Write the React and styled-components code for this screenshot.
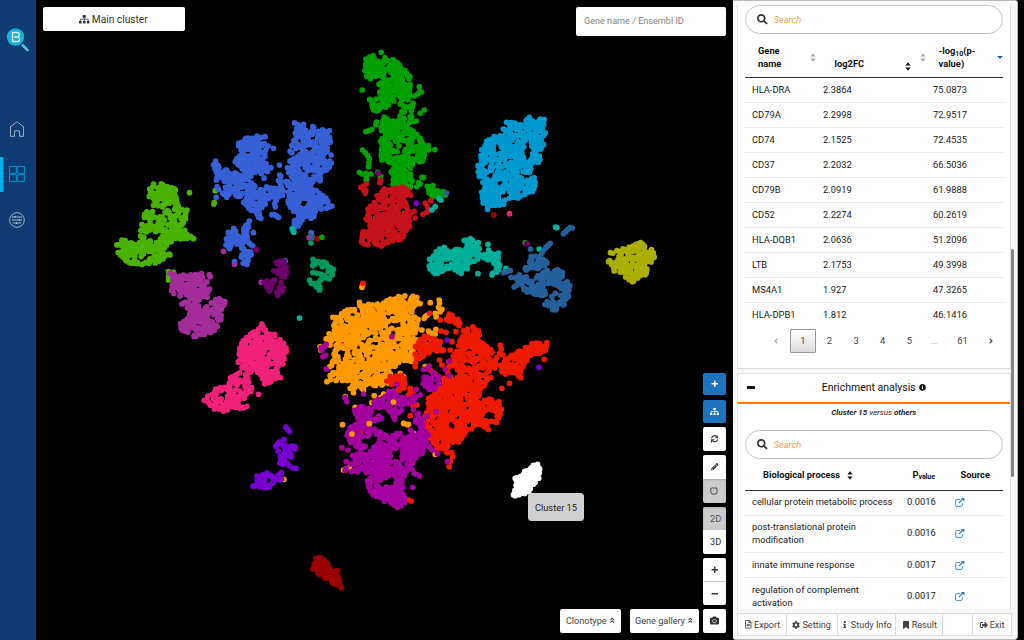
import React from "react";
import styled, { createGlobalStyle, css } from "styled-components";
import {
  FaSitemap, FaPlus, FaMinus, FaSync, FaPencilAlt, FaCamera, FaSearch, FaCog, FaInfo,
  FaBookmark, FaRegFileAlt, FaSignOutAlt, FaInfoCircle, FaAngleDoubleUp,
  FaAngleLeft, FaAngleRight,
} from "react-icons/fa";

const GlobalStyle = createGlobalStyle`
  * { box-sizing: border-box; }
  body { margin: 0; background: #000; overflow: hidden; font-family: Roboto, "Liberation Sans", sans-serif; color: #222; font-size: 9.33px; }
  svg { display: block; flex: none; }
`;

/* ---------- scatter data: outlines are in thirds of a pixel from each origin ---------- */
const C = {
  lime: "#4ab300", blue: "#3560d6", plum: "#a32d9b", dark: "#6b006b", sea: "#00995c",
  green: "#00a000", red: "#c41218", sky: "#0099cf", teal: "#00ae9c", steel: "#24619c",
  yellow: "#abb000", orange: "#ff9900", flame: "#f01a00", purple: "#a3009e",
  pink: "#f02277", violet: "#7500d1", maroon: "#990000", white: "#ffffff",
};

const GROUPS = [
  { o: [100, 110], c: "lime", areas: ["160,225 190,225 225,235 230,260 235,290 260,305 255,345 250,372 282,385 240,387 205,398 205,415 190,450 155,460 100,462 80,455 50,428 48,405 80,398 115,402 125,375 125,345 170,345 180,320 200,300 175,285 150,260 150,240", "130,310 155,305 163,318 150,330 132,320"], holes: ["165,365 190,378 155,395 140,385", "150,400 175,398 165,412"], dots: "268,248 345,242 342,278 341,282 160,286 65,390 75,392 205,485 205,510 220,487 205,500 208,432 209,435 260,300 280,386 272,380" },
  { o: [100, 110], c: "blue", areas: ["412,100 435,88 465,80 503,85 500,105 480,112 478,125 498,120 495,150 500,200 470,208 440,195 405,155 425,130", "345,150 360,175 400,185 440,205 470,235 520,225 540,190 552,250 525,285 500,260 480,315 450,300 430,275 400,255 380,262 355,240 350,200 340,165", "585,40 608,42 620,70 640,52 690,60 692,110 675,120 690,135 692,180 660,190 660,215 635,205 650,245 680,265 692,290 650,295 645,330 610,320 605,345 580,350 578,330 590,310 565,285 568,250 540,235 555,215 580,210 558,180 570,150 590,140 605,125 605,100 575,125 568,120 585,95", "372,385 405,350 430,355 443,325 450,335 440,370 445,400 462,400 455,425 440,460 420,455 430,420 415,405 375,415"], holes: ["425,220 450,212 445,228", "600,270 618,285 605,295"], dots: "520,115 512,173 538,165 525,290 482,325 348,262 515,314 522,314 528,317 535,322 460,368 403,455 633,368 555,452 695,288 638,50 475,322 470,78 495,80" },
  { o: [100, 110], c: "plum", areas: ["215,500 235,500 270,495 305,490 312,505 330,540 320,558 290,560 298,580 290,610 320,590 345,570 375,578 365,600 362,620 345,662 290,683 240,665 240,640 265,620 258,575 255,560 215,555 210,525"], holes: ["262,545 280,535 275,560"], dots: "357,566 362,628 210,489 222,493 232,505 245,582 327,494 330,500 370,424 403,463 483,517 627,383" },
  { o: [100, 110], c: "dark", areas: ["528,455 558,452 560,475 566,498 545,500 522,482", "490,515 520,505 520,515 510,545 500,535", "540,515 552,525 545,550 525,555 538,535"], dots: "468,419 523,510 543,518 550,534 532,556 500,520 492,518" },
  { o: [100, 110], c: "sea", areas: ["632,450 670,455 690,465 705,480 690,505 665,520 657,540 645,525 665,505 685,490 680,475 665,468 638,465"], dots: "638,448 640,460 638,488 650,490 662,492 628,510 633,520 632,399 658,540 650,530 700,478" },
  { o: [100, 110], c: "teal", dots: "576,356 578,362 581,367 598,624" },
  { o: [100, 110], c: "steel", dots: "635,378 637,383" },
  { o: [100, 110], c: "maroon", dots: "650,386" },
  { o: [100, 110], c: "green", dots: "665,382" },

  { o: [340, 40], c: "green", areas: ["75,60 95,48 115,65 150,52 180,60 190,90 210,105 210,170 195,180 150,180 135,210 100,215 92,180 120,170 115,125 80,110 72,90", "195,200 225,190 215,225 230,240 210,250 195,215", "105,245 130,235 150,240 190,235 200,260 230,285 250,310 280,325 255,340 250,365 215,370 210,400 220,440 160,440 150,400 155,370 125,360 120,320 130,280 115,260", "265,440 285,445 315,462 290,472 265,460"], holes: ["105,70 125,75 115,85", "180,295 205,320 185,325 170,310"], dots: "123,37 66,150 223,168 232,162 240,155 237,140 244,156 77,275 86,272 95,268 240,220 252,210 67,330 75,338 82,347 87,356 86,368 85,380 57,397 66,402 78,400 92,402 78,412 78,420 250,413 235,428 240,432 230,440 245,412 278,437 310,455 278,470 120,410 113,397 555,608 180,192 190,198 185,215 180,228" },
  { o: [340, 40], c: "red", areas: ["130,450 160,445 185,438 215,455 220,466 190,470 200,500 210,540 205,560 185,600 150,600 135,620 105,610 65,618 62,580 95,570 85,540 85,510 100,490 110,465"], holes: ["125,540 140,545 130,555", "160,490 178,485 170,500"], dots: "62,442 70,438 78,432 70,450 75,460 77,450 120,420 119,428 255,490 262,500 265,512 260,516 248,523 272,482 225,534 213,517 222,514 83,508 78,537" },
  { o: [340, 40], c: "sky", areas: ["500,250 520,245 550,255 560,235 580,228 610,240 612,290 605,320 592,370 578,378 565,400 588,425 585,450 550,470 520,475 490,470 490,492 440,502 422,480 428,460 435,440 415,400 415,360 425,340 435,305 470,295"], holes: ["545,340 572,295 578,345 555,360", "500,430 508,432 515,455 506,452", "525,375 545,390 550,405 530,395"], dots: "442,508 430,463 462,290" },
  { o: [340, 40], c: "violet", dots: "228,490" },
  { o: [340, 40], c: "dark", dots: "114,400 560,611" },
  { o: [340, 40], c: "steel", dots: "319,459" },
  { o: [340, 40], c: "teal", dots: "297,476 302,480 275,510 285,500 646,561 650,563" },
  { o: [340, 40], c: "maroon", dots: "461,525" },
  { o: [340, 40], c: "pink", dots: "508,521" },

  { o: [400, 200], c: "teal", areas: ["85,180 100,165 130,145 150,160 180,130 200,118 230,118 240,145 265,160 298,160 290,185 305,210 280,220 285,190 240,170 210,185 200,208 150,205 105,220 88,195"], holes: ["125,180 150,185 155,198 130,195"], dots: "263,133 233,221 317,205 183,220 417,147 275,225 265,150 132,142 175,215" },
  { o: [400, 200], c: "steel", areas: ["395,170 430,170 440,190 425,210 405,200 378,212 372,205 390,190", "345,230 365,225 385,240 410,235 430,212 455,205 485,215 490,240 508,255 505,290 490,320 465,330 437,315 445,305 470,310 485,285 480,262 450,248 430,255 440,265 430,295 400,280 370,275 355,250"], dots: "391,147 450,130 443,137 437,143 430,150 425,160 490,101 497,95 503,88 511,82 516,84 319,215 330,212 332,232 342,261 350,255 455,290 465,280 310,218" },
  { o: [400, 200], c: "yellow", areas: ["648,158 665,150 672,137 700,135 725,125 740,145 760,153 758,180 745,195 735,220 700,243 670,220 642,210 630,185 655,175"], holes: ["670,190 700,185 705,192 690,195"], dots: "631,158 638,160 625,185 650,152 762,172 735,224 642,213 697,245" },

  { o: [300, 270], c: "orange", areas: ["115,135 130,125 180,105 240,105 260,95 310,78 350,85 360,100 330,115 350,150 345,230 330,270 290,280 270,315 240,345 200,345 165,360 140,335 95,330 90,290 105,250 80,205 95,180"], holes: ["105,253 135,235 147,242 140,252 115,262", "240,210 260,205 255,230", "285,110 300,120 290,130"], dots: "98,142 178,97 205,103 232,102 375,140 372,145 380,136 417,90 418,100 415,112 420,125 408,140 405,130 425,118 385,183 395,190 407,178 405,192 383,200 390,98 383,226 60,230 62,240 80,335 127,464 185,52 187,46 150,355 160,368 190,362 135,380 222,377 232,390 250,372 310,460 325,463 130,600 148,593 205,460 185,445 165,412 215,398 155,492 300,310 310,320 295,330 405,553 340,490 245,345 265,340 280,395 375,290 350,225 360,215 345,180 365,180 330,260 340,275 220,345 185,355 258,375 242,382" },
  { o: [300, 270], c: "flame", areas: ["435,125 470,150 495,165 535,180 545,220 575,240 582,270 580,310 565,335 545,350 535,380 520,395 530,460 500,480 480,510 450,520 440,540 410,535 385,500 375,460 380,400 400,370 430,350 440,300 440,280 465,250 480,205 490,180 465,160 440,150", "530,400 570,385 600,395 602,430 590,460 565,475 525,465", "600,285 625,265 660,240 710,220 740,220 738,240 725,250 690,255 672,290 660,322 635,305 605,310", "365,195 410,210 422,240 380,250 345,280 350,230", "270,330 310,312 318,355 300,370"], holes: ["549,440 566,418 590,423 585,452 562,454", "440,465 460,450 470,475 445,480", "450,285 480,310 460,330 445,310", "480,375 500,370 495,395"], dots: "423,183 437,187 467,185 188,40 388,130 605,355 628,340 333,693 325,690 330,437 338,407 475,516 732,268 600,225 603,237 598,250 590,262 608,255 740,218 455,548 457,560 450,575 447,590 440,548 420,150 455,215 450,240 418,270 425,285 400,310 430,325 420,215 430,240 270,320 290,318 330,355 280,340 325,375 350,405 358,520 345,290 180,485 260,333 330,365 338,370 390,300 405,312 410,395 385,385" },
  { o: [300, 270], c: "purple", areas: ["370,315 400,305 410,330 405,360 380,360 368,340", "140,475 175,460 165,420 210,398 250,385 280,365 290,385 330,385 355,375 320,410 280,445 260,410 235,400 215,420 210,460 220,480 250,490 300,490 330,515 335,490 350,430 365,440 380,490 375,540 350,560 330,585 325,600 305,625 310,660 325,690 290,710 250,690 210,670 200,630 220,610 160,605 145,580 180,540 145,510", "225,425 238,415 242,445 225,455"], holes: ["270,540 300,540 305,565 285,575 275,590", "175,520 215,500 235,515 200,525", "255,625 285,620 280,645 250,650", "295,425 330,440 320,480 290,480"], dots: "65,240 78,223 73,230 68,260 76,256 63,233 78,297 275,200 387,288 380,296 370,298 447,273 447,317 435,298 290,343 348,358 190,372 135,383 140,395 125,533 143,540 157,557 138,575 135,601 380,438 407,425 397,540 412,551 442,575 337,652 335,597 342,610 358,618 348,612 360,375 340,420 280,370 265,365 415,340 415,320 325,500 370,515 387,530 393,538 345,455 150,500 155,605 138,595 385,495 330,480" },
  { o: [300, 270], c: "orange", dots: "313,461 322,464 155,492 280,396 207,461" },
  { o: [300, 270], c: "violet", dots: "441,210 716,292" },
  { o: [300, 270], c: "white", dense: true, areas: ["645,625 670,614 680,595 712,582 720,595 713,625 695,655 660,678 642,676 642,660 650,650 644,640"], dots: "712,583 640,674 645,677 688,600 645,625" },

  { o: [190, 310], c: "pink", areas: ["190,70 215,45 230,65 250,80 285,105 285,130 275,160 262,190 265,200 245,212 225,225 215,205 205,185 190,178 165,195 180,220 188,235 150,270 155,285 110,300 65,295 50,272 65,240 110,230 128,195 160,185 148,160 145,100 175,80"], holes: ["215,85 240,98 235,108 220,95", "80,250 105,240 115,250 100,262", "150,225 165,235 155,245"], dots: "205,253 270,203 170,289 160,293 149,295 42,271 253,73 288,125 280,100 215,42 185,70" },
  { o: [190, 310], c: "violet", areas: ["265,390 278,386 285,405 300,412 300,437 285,445 290,465 268,462 270,435 258,410", "192,525 202,497 225,488 265,495 270,508 240,533 198,533"], dots: "287,351 292,357 298,364 314,410 315,417 305,408 308,474 317,475 297,467 273,488 188,528 303,437" },
  { o: [190, 310], c: "orange", dots: "281,508" },
  { o: [190, 310], c: "violet", dots: "274,507" },
  { o: [190, 310], c: "maroon", dense: true, areas: ["370,755 388,742 410,755 420,775 435,788 445,800 455,833 430,820 400,805 375,778"], dots: "442,782 438,788 368,777 453,834 388,743 445,825" },
];

const pairs = (s) => s.split(" ").map((p) => p.split(",").map(Number));

function inside([x, y], poly) {
  let hit = false;
  for (let i = 0, j = poly.length - 1; i < poly.length; j = i++) {
    const [xi, yi] = poly[i];
    const [xj, yj] = poly[j];
    if (yi > y !== yj > y && x < ((xj - xi) * (y - yi)) / (yj - yi) + xi) hit = !hit;
  }
  return hit;
}

function randomFrom(seed) {
  let s = seed;
  return () => {
    s = (s * 1664525 + 1013904223) % 4294967296;
    return s / 4294967296;
  };
}

function scatterPath({ o, areas = [], holes = [], dots, dense }, index) {
  const rnd = randomFrom(977 * (index + 3));
  const cuts = holes.map(pairs);
  const points = dots ? pairs(dots) : [];
  areas.map(pairs).forEach((poly) => {
    const xs = poly.map((p) => p[0]);
    const ys = poly.map((p) => p[1]);
    const x0 = Math.min(...xs), y0 = Math.min(...ys);
    const w = Math.max(...xs) - x0, h = Math.max(...ys) - y0;
    const count = (w * h) / (dense ? 35 : 76);
    for (let i = 0; i < count; i++) {
      const p = [x0 + rnd() * w, y0 + rnd() * h];
      if (inside(p, poly) && !cuts.some((c) => inside(p, c))) points.push(p);
    }
    // cells along the rim keep thin necks connected
    poly.forEach(([ax, ay], i) => {
      const [bx, by] = poly[(i + 1) % poly.length];
      const steps = Math.max(1, Math.round(Math.hypot(bx - ax, by - ay) / 12));
      for (let s = 0; s < steps; s++) {
        if (rnd() < 0.45) continue;
        const t = s / steps;
        points.push([ax + (bx - ax) * t + (rnd() - 0.5) * 8, ay + (by - ay) * t + (rnd() - 0.5) * 8]);
      }
    });
  });
  return points.map(([x, y]) => `M${(o[0] + x / 3).toFixed(1)} ${(o[1] + y / 3).toFixed(1)}h.01`).join("");
}

const PATHS = GROUPS.map((g, i) => ({ color: C[g.c], d: scatterPath(g, i) }));

/* ---------- page ---------- */
const Page = styled.div`
  display: flex;
  width: 1024px;
  height: 640px;
  background: #000;
  overflow: hidden;
`;
const Sidebar = styled.nav`
  width: 35.5px;
  background: #0f3c73;
  padding-top: 26px;
  display: flex;
  flex-direction: column;
  align-items: center;
`;
const Logo = styled.div`
  height: 80px;
  width: 28px;
`;
const NavItem = styled.a`
  width: 35.5px;
  height: 35px;
  margin-bottom: 10.8px;
  padding-right: 1px;
  display: flex;
  align-items: center;
  justify-content: center;
  color: ${(p) => (p.$active ? "#078cc6" : "#a6b8cf")};
  box-shadow: ${(p) => (p.$active ? "inset 3.5px 0 0 #00b1e8" : "none")};
  &:first-of-type { margin-top: 5px; }
`;

const Stage = styled.main`
  position: relative;
  width: 697.5px;
  height: 640px;
`;
const Plot = styled.svg`
  position: absolute;
  inset: 0;
`;
const TopBar = styled.div`
  position: relative;
  display: flex;
  justify-content: space-between;
  align-items: flex-start;
  padding: 7px 7px 0 7px;
`;
const MainCluster = styled.button`
  width: 142px;
  height: 24px;
  border: 0;
  border-radius: 2px;
  background: #fff;
  color: #333;
  font: 10.2px Roboto, sans-serif;
  display: flex;
  align-items: center;
  justify-content: center;
  gap: 2px;
`;
const GeneInput = styled.input`
  width: 150px;
  height: 28.5px;
  border: 0;
  border-radius: 2px;
  padding: 0 8px;
  font: 9.1px Roboto, sans-serif;
  background: #fff;
  &::placeholder { color: #858585; opacity: 1; }
`;
const Tip = styled.div`
  position: absolute;
  left: 492.5px;
  top: 493px;
  width: 56px;
  height: 28px;
  border-radius: 3.5px;
  background: #cfcfcf;
  color: #222;
  display: flex;
  align-items: center;
  justify-content: center;
  font-size: 9.3px;
`;
const Tools = styled.div`
  position: absolute;
  right: 7.5px;
  bottom: 7.5px;
  display: flex;
  flex-direction: column;
  gap: 4px;
`;
const Group = styled.div`
  border-radius: 2px;
  overflow: hidden;
  margin-bottom: ${(p) => p.$mb || 0}px;
`;
const Tool = styled.button`
  display: flex;
  align-items: center;
  justify-content: center;
  width: 22.5px;
  height: ${(p) => p.$h || 24}px;
  padding: 0;
  border: 0;
  font: 9.3px Roboto, sans-serif;
  padding-left: ${(p) => (p.$text ? 3 : 0)}px;
  background: #fff;
  color: #333;
  ${(p) => p.$blue && css`background: #1e73be; color: #fff;`}
  ${(p) => p.$on && css`background: #cbcbcb; color: #555; box-shadow: inset 0 1px 2px #aaa;`}
  ${(p) => p.$line && css`border-top: 1px solid #ccc;`}
`;
const Drawers = styled.div`
  position: absolute;
  right: 34px;
  bottom: 7.5px;
  display: flex;
  gap: 8.5px;
`;
const Drawer = styled.button`
  width: ${(p) => p.$w}px;
  height: 24px;
  border: 0;
  border-radius: 2px;
  background: #fff;
  color: #444;
  padding: 0;
  font: 9.1px Roboto, sans-serif;
  display: flex;
  align-items: center;
  justify-content: center;
  gap: 2px;
`;

const Panel = styled.aside`
  width: 285px;
  height: 639.5px;
  background: #f8f8f8;
  border: 1px solid #bbb;
  border-width: 1px 1px 1px 0;
  border-radius: 0 3px 4px 3px;
  display: flex;
  flex-direction: column;
`;
const Scroller = styled.div`
  display: flex;
  height: 608px;
  padding-left: 4px;
  overflow: hidden;
`;
const Cards = styled.div`
  width: 273.5px;
`;
const Thumb = styled.div`
  width: 3.5px;
  height: 228px;
  margin-top: 248px;
  border-radius: 2px;
  background: #848484;
`;
const Card = styled.section`
  background: #fff;
  border: 1px solid #ddd;
  border-top-width: ${(p) => (p.$first ? 0 : 1)}px;
  height: ${(p) => p.$h}px;
  margin-bottom: 4px;
  padding: 0 7px;
`;
const Search = styled.label`
  display: flex;
  align-items: center;
  height: 29px;
  margin-top: ${(p) => p.$mt}px;
  border: 1px solid #c4c4c4;
  border-radius: 15px;
  padding-left: 11px;
  gap: 6px;
  color: #333;
  font-size: 9.3px;
  font-style: italic;
  span { color: #ff9c4d; }
`;
const Table = styled.table`
  width: 258px;
  table-layout: fixed;
  border-collapse: separate;
  border-spacing: 0;
  td { border-bottom: 1px solid #e7eaec; padding: 0 0 0 7px; height: 25px; line-height: 12.7px; }
  tr:last-child td { border-bottom: 0; }
`;
const Th = styled.th`
  text-align: left;
  font-weight: 700;
  color: #111;
  height: ${(p) => p.$h}px;
  padding: ${(p) => p.$pt || 0}px 0 0 ${(p) => p.$pl}px;
  border-bottom: 1px solid #333;
  vertical-align: middle;
  line-height: 12.7px;
`;
const ThBody = styled.div`
  display: flex;
  align-items: ${(p) => (p.$low ? "flex-end" : "center")};
  height: 26px;
  justify-content: ${(p) => (p.$tight ? "flex-start" : "space-between")};
  gap: ${(p) => (p.$tight ? 7 : 0)}px;
  padding-right: ${(p) => p.$pr || 0}px;
  sub { font-size: 7px; line-height: 0; vertical-align: -1.5px; }
`;
const PValueTitle = styled.span`
  display: flex;
  align-items: baseline;
  small { font-size: 7px; letter-spacing: -0.1px; position: relative; top: 1px; }
`;
const LastTitle = styled.span`
  display: flex;
  align-items: center;
  gap: 12.5px;
  margin-left: -6px;
`;
const TallRow = styled.tr`
  td { height: 37.5px; }
`;
const Pager = styled.div`
  display: flex;
  align-items: center;
  height: 25px;
  padding-left: 18px;
  color: #444;
`;
const PageNo = styled.span`
  width: ${(p) => p.$w || 26.6}px;
  height: 24px;
  display: flex;
  align-items: center;
  justify-content: center;
  color: ${(p) => (p.$dim ? "#aaa" : "#444")};
  ${(p) => p.$on && css`border: 1px solid #979797; border-radius: 1px; background: linear-gradient(#fff, #dcdcdc);`}
`;
const CardHead = styled.header`
  display: flex;
  align-items: center;
  margin: 0 -7px;
  padding-left: 9px;
  height: 29.5px;
  border-bottom: 2px solid #ff7a00;
`;
const Collapse = styled.span`
  width: 8px;
  height: 3px;
  border-radius: 0.5px;
  background: #111;
`;
const HeadTitle = styled.h2`
  flex: 1;
  margin: 0;
  color: #111;
  font-size: 10.5px;
  font-weight: 400;
  display: flex;
  justify-content: center;
  align-items: center;
  gap: 3px;
  padding-right: 17px;
`;
const Versus = styled.p`
  margin: 0;
  height: 18px;
  line-height: 18px;
  text-align: center;
  font-style: italic;
  font-size: 8px;
`;
const Footer = styled.footer`
  display: flex;
  height: 23px;
  margin: 4px 0 0 4px;
  width: 275px;
  border: 1px solid #ddd;
  background: #fff;
`;
const FootBtn = styled.button`
  width: ${(p) => p.$w}px;
  border: 0;
  border-right: 1px solid #ddd;
  background: #fff;
  padding: 0;
  color: #444;
  font: 9.1px Roboto, sans-serif;
  display: flex;
  align-items: center;
  justify-content: center;
  gap: 2px;
  &:last-child { border-right: 0; }
`;

const LinkIcon = () => (
  <svg width="10" height="9" viewBox="0 0 10 9" fill="none" stroke="#2b83c9">
    <path d="M5.4 1.6H1.8Q.6 1.6.6 2.8v4.4q0 1.2 1.2 1.2h4.4q1.2 0 1.2-1.2V5.2" strokeWidth=".9" />
    <path d="M3.8 5.2 8 1" strokeWidth="1.2" />
    <path d="M6 0h3.4v3.4z" fill="#1e73be" stroke="none" />
  </svg>
);

const SortPair = ({ color = "#aaa" }) => (
  <svg width="6" height="9" viewBox="0 0 6 9" fill={color}><path d="M3 .3 5.6 3.4H.4zM3 8.7.4 5.6h5.2z" /></svg>
);

const GENES = [
  ["HLA-DRA", "2.3864", "75.0873"], ["CD79A", "2.2998", "72.9517"], ["CD74", "2.1525", "72.4535"],
  ["CD37", "2.2032", "66.5036"], ["CD79B", "2.0919", "61.9888"], ["CD52", "2.2274", "60.2619"],
  ["HLA-DQB1", "2.0636", "51.2096"], ["LTB", "2.1753", "49.3998"], ["MS4A1", "1.927", "47.3265"],
  ["HLA-DPB1", "1.812", "46.1416"],
];
const PROCESSES = [
  ["cellular protein metabolic process", "0.0016", false],
  ["post-translational protein modification", "0.0016", true],
  ["innate immune response", "0.0017", false],
  ["regulation of complement activation", "0.0017", true],
];

export default function App() {
  return (
    <Page>
      <GlobalStyle />
      <Sidebar>
        <Logo>
          <svg width="28" height="28" viewBox="0 0 28 28">
            <circle cx="11.5" cy="11" r="8.7" fill="#14b2dc" />
            <path d="m18 18.5 6.3 6.3" stroke="#54c7d6" strokeWidth="2.5" />
            <path d="M8.5 6.5h4.9q1.8 0 1.8 2t-1.5 2.6q2 .3 2 2.3t-2 2.1H8.5zV15.5M10 11h3.7" fill="none" stroke="#d9f7ff" strokeWidth="1.3" />
          </svg>
        </Logo>
        <NavItem>
          <svg width="16" height="16" viewBox="0 0 16 16" fill="none" stroke="currentColor" strokeWidth=".9"><path d="M1 6.2 8 .7l7 5.5M1.5 6v9.3h4V9.8h5v5.5h4V6" /></svg>
        </NavItem>
        <NavItem $active>
          <svg width="16" height="16" viewBox="0 0 16 16" fill="none" stroke="currentColor"><path d="M.5.5h6.8v6.8H.5zM8.7.5h6.8v6.8H8.7zM.5 8.7h6.8v6.8H.5zM8.7 8.7h6.8v6.8H8.7z" /></svg>
        </NavItem>
        <NavItem>
          <svg width="16" height="16" viewBox="0 0 16 16" fill="none" stroke="currentColor"><circle cx="8" cy="8" r="7.3" strokeWidth=".9" /><path d="M3 5h10M3 8h10M4 11h8M6 4v2M10.5 7v2M7.5 10v2" strokeWidth="1.1" /></svg>
        </NavItem>
      </Sidebar>

      <Stage>
        <Plot width="697.5" height="640" viewBox="35.8 0 697.5 640">
          {PATHS.map((p, i) => (
            <path key={i} d={p.d} stroke={p.color} strokeWidth="5.7" strokeLinecap="round" fill="none" />
          ))}
        </Plot>
        <TopBar>
          <MainCluster><FaSitemap size={10.5} />Main cluster</MainCluster>
          <GeneInput placeholder="Gene name / Ensembl ID" />
        </TopBar>
        <Tip>Cluster 15</Tip>
        <Drawers>
          <Drawer $w={61}>Clonotype <FaAngleDoubleUp size={6.5} /></Drawer>
          <Drawer $w={69.5}>Gene gallery <FaAngleDoubleUp size={6.5} /></Drawer>
        </Drawers>
        <Tools>
          <Group $mb={1}><Tool $blue $h={22.5}><FaPlus size={7.5} /></Tool></Group>
          <Group $mb={0.5}><Tool $blue $h={22.5}><FaSitemap size={9} /></Tool></Group>
          <Group><Tool $h={24}><FaSync size={7.5} /></Tool></Group>
          <Group>
            <Tool $h={23.5}><FaPencilAlt size={7.5} /></Tool>
            <Tool $on $h={24}>
              <svg width="8" height="8" viewBox="0 0 8 8" fill="none" stroke="#555" strokeWidth="1"><path d="M.8 1.5 2.6.8 4.2 1.2 6.8.9l.3 3.2-.5 2.5-2.7.6-2.3-.4L.8 5z" /></svg>
            </Tool>
          </Group>
          <Group><Tool $on $text $h={23.5}>2D</Tool><Tool $text $h={23.5}>3D</Tool></Group>
          <Group><Tool $h={23.5}><FaPlus size={7.5} /></Tool><Tool $line $h={23.5}><FaMinus size={7.5} /></Tool></Group>
          <Group><Tool $h={24}><FaCamera size={9} /></Tool></Group>
        </Tools>
      </Stage>

      <Panel>
        <Scroller>
          <Cards>
            <Card $first $h={364}>
              <Search $mt={4}><FaSearch size={10.5} /><span>Search</span></Search>
              <Table>
                <colgroup><col width="71" /><col width="110" /><col width="77" /></colgroup>
                <thead>
                  <tr>
                    <Th $h={44} $pt={4} $pl={13}><ThBody><span>Gene<br />name</span><SortPair /></ThBody></Th>
                    <Th $h={44} $pt={4} $pl={18.5}><ThBody $low $pr={15}><span>log2FC</span><SortPair color="#111" /></ThBody></Th>
                    <Th $h={44} $pt={4} $pl={0}>
                      <ThBody>
                        <LastTitle>
                          <SortPair /><span>-log<sub>10</sub>(p-<br />value)</span>
                        </LastTitle>
                        <svg width="6" height="3" viewBox="0 0 6 3"><path d="M0 0h6L3 3z" fill="#1c5d99" /></svg>
                      </ThBody>
                    </Th>
                  </tr>
                </thead>
                <tbody>
                  {GENES.map((g) => (
                    <tr key={g[0]}>{g.map((v) => <td key={v}>{v}</td>)}</tr>
                  ))}
                </tbody>
              </Table>
              <Pager>
                <PageNo $dim><FaAngleLeft size={8} /></PageNo>
                <PageNo $on>1</PageNo>
                <PageNo>2</PageNo><PageNo>3</PageNo><PageNo>4</PageNo><PageNo>5</PageNo>
                <PageNo $w={23} $dim>…</PageNo>
                <PageNo $w={34}>61</PageNo>
                <PageNo $w={22}><FaAngleRight size={8} /></PageNo>
              </Pager>
            </Card>

            <Card $h={260}>
              <CardHead>
                <Collapse />
                <HeadTitle>Enrichment analysis <FaInfoCircle size={7} /></HeadTitle>
              </CardHead>
              <Versus><b>Cluster 15</b> versus <b>others</b></Versus>
              <Search $mt={8.5}><FaSearch size={10.5} /><span>Search</span></Search>
              <Table>
                <colgroup><col width="155" /><col width="48" /><col width="55" /></colgroup>
                <thead>
                  <tr>
                    <Th $h={31.5} $pt={3} $pl={18}><ThBody $tight><span>Biological process</span><SortPair color="#111" /></ThBody></Th>
                    <Th $h={31.5} $pt={4} $pl={12.5}><ThBody><PValueTitle>P<small>value</small></PValueTitle></ThBody></Th>
                    <Th $h={31.5} $pt={3} $pl={12.5}><ThBody><span>Source</span></ThBody></Th>
                  </tr>
                </thead>
                <tbody>
                  {PROCESSES.map(([name, p, tall]) => {
                    const Row = tall ? TallRow : "tr";
                    return (
                      <Row key={name}>
                        <td>{tall ? <>{name.slice(0, name.lastIndexOf(" "))}<br />{name.slice(name.lastIndexOf(" ") + 1)}</> : name}</td>
                        <td>{p}</td>
                        <td><LinkIcon /></td>
                      </Row>
                    );
                  })}
                </tbody>
              </Table>
            </Card>
          </Cards>
          <Thumb />
        </Scroller>
        <Footer>
          <FootBtn $w={49}><FaRegFileAlt size={8.5} />Export</FootBtn>
          <FootBtn $w={51}><FaCog size={8} />Setting</FootBtn>
          <FootBtn $w={59}><FaInfo size={7.5} />Study Info</FootBtn>
          <FootBtn $w={47}><FaBookmark size={8} />Result</FootBtn>
          <FootBtn $w={30} />
          <FootBtn $w={38}><FaSignOutAlt size={8} />Exit</FootBtn>
        </Footer>
      </Panel>
    </Page>
  );
}
